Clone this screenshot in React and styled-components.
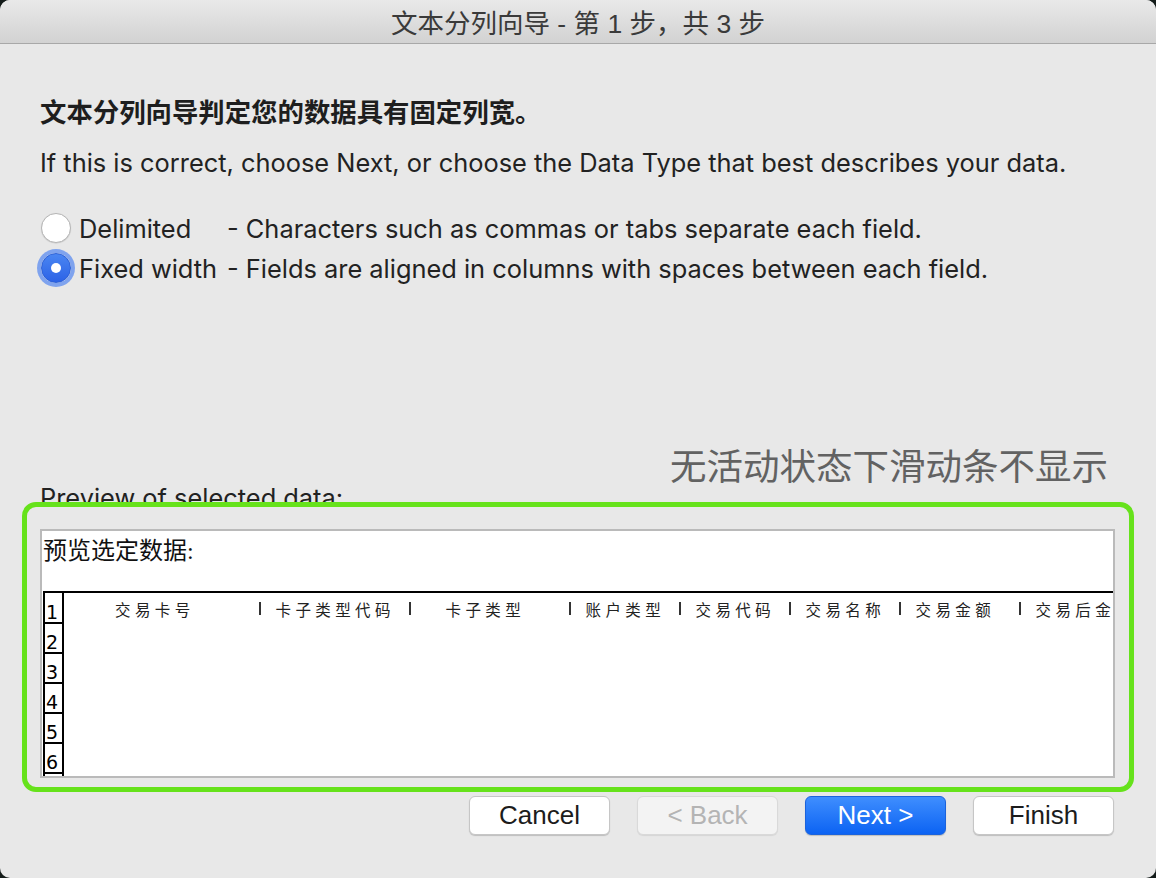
import React from 'react';
import styled, { createGlobalStyle } from 'styled-components';

const GlobalStyle = createGlobalStyle`
  html, body {
    margin: 0;
    padding: 0;
    background: #141c1a;
  }
  #root {
    width: 1156px;
    height: 878px;
  }
`;

const Window = styled.div`
  width: 1156px;
  height: 878px;
  box-sizing: border-box;
  background: #e8e8e8;
  border-radius: 10px;
  overflow: hidden;
  display: flex;
  flex-direction: column;
  font-family: Inter, 'Noto Sans CJK SC', sans-serif;
  color: #222;
`;

const TitleBar = styled.div`
  flex: none;
  height: 43px;
  background: linear-gradient(#e9e9e9, #d2d2d2);
  border-bottom: 1px solid #a8a8a8;
  display: flex;
  align-items: center;
  justify-content: center;
  font-family: 'Liberation Sans', 'Noto Sans CJK SC', sans-serif;
  font-size: 26.5px;
  color: #3a3a3a;
`;

const Body = styled.div`
  display: flex;
  flex-direction: column;
  padding-left: 40px;
`;

const Heading = styled.div`
  margin-top: 50px;
  font-size: 26.4px;
  line-height: 36px;
  font-weight: 700;
  color: #1e1e1e;
`;

const Hint = styled.div`
  margin-top: 15px;
  font-size: 25.4px;
  line-height: 36px;
  color: #222;
`;

const Options = styled.div`
  margin-top: 27px;
  display: flex;
  flex-direction: column;
`;

const OptionRow = styled.div`
  height: 40px;
  display: flex;
  align-items: center;
  font-size: 25.4px;
  color: #222;
`;

const Radio = styled.span`
  flex: none;
  box-sizing: border-box;
  width: 30px;
  height: 30px;
  margin-left: 1px;
  margin-right: 8px;
  border-radius: 50%;
  display: flex;
  align-items: center;
  justify-content: center;
  background: ${(p) => (p.$checked ? 'linear-gradient(#4a86f2, #2c62e6)' : '#fff')};
  border: 1px solid ${(p) => (p.$checked ? '#2a5fd8' : '#b5b5b5')};
  box-shadow: ${(p) => (p.$checked ? '0 0 0 4px rgba(92, 140, 240, 0.75)' : '0 0.5px 1px rgba(0,0,0,0.15)')};

  &::after {
    content: '';
    display: ${(p) => (p.$checked ? 'block' : 'none')};
    width: 10px;
    height: 10px;
    border-radius: 50%;
    background: #fff;
  }
`;

const OptionName = styled.span`
  width: 148px;
  flex: none;
`;

const Note = styled.div`
  margin-top: 159px;
  padding-right: 48px;
  text-align: right;
  font-family: 'Noto Sans CJK SC', sans-serif;
  font-size: 36.5px;
  line-height: 36px;
  color: #626262;
`;

const PreviewLabel = styled.div`
  margin-top: 1px;
  font-size: 25.4px;
  line-height: 28px;
  color: #222;
`;

const Highlight = styled.div`
  position: relative;
  z-index: 1;
  box-sizing: border-box;
  width: 1112px;
  height: 290px;
  margin-top: -10px;
  margin-left: -18px;
  padding: 22px 0 0 13px;
  border: 5px solid #66e21b;
  border-radius: 14px;
  background: #e8e8e8;
`;

const PreviewBox = styled.div`
  box-sizing: border-box;
  width: 1075px;
  height: 249px;
  background: #fff;
  border: 2px solid #bababa;
  overflow: hidden;
  display: flex;
  flex-direction: column;
`;

const PreviewTitle = styled.div`
  box-sizing: border-box;
  height: 60px;
  flex: none;
  padding: 2px 0 0 1px;
  font-family: 'Liberation Serif', 'Noto Sans CJK SC', serif;
  font-size: 24px;
  line-height: 36px;
  color: #111;
`;

const Grid = styled.div`
  flex: none;
  margin-left: 1px;
  border-top: 2px solid #000;
  display: flex;
`;

const NumCol = styled.div`
  flex: none;
  width: 17px;
  border-left: 2px solid #000;
  border-right: 2px solid #000;
  display: flex;
  flex-direction: column;
`;

const NumCell = styled.div`
  box-sizing: border-box;
  height: ${(p) => (p.$first ? '31px' : '30px')};
  border-bottom: 2px solid #000;
  padding-left: 1px;
  display: flex;
  align-items: flex-end;
  font-family: 'DejaVu Sans', sans-serif;
  font-size: 19px;
  line-height: 20px;
  color: #000;
`;

const DataCol = styled.div`
  flex: 1;
  border-right: 2px solid #000;
  min-height: 200px;
`;

const HeaderRow = styled.div`
  height: 31px;
  display: flex;
  align-items: center;
  white-space: nowrap;
  overflow: hidden;
`;

const HeaderCell = styled.div`
  flex: ${(p) => (p.$w ? `0 0 ${p.$w}px` : '1')};
  display: flex;
  align-items: center;
  font-family: 'Liberation Serif', 'Noto Sans CJK SC', serif;
  font-size: 15.5px;
  letter-spacing: 4.4px;
  color: #222;
`;

const Sep = styled.span`
  flex: none;
  width: 1.5px;
  height: 13px;
  background: #333;
`;

const Label = styled.span`
  margin-left: ${(p) => p.$pad}px;
`;

const Footer = styled.div`
  margin-top: 4px;
  padding-right: 42px;
  display: flex;
  justify-content: flex-end;
  gap: 27px;
`;

const Button = styled.button`
  box-sizing: border-box;
  width: 141px;
  height: 39px;
  border-radius: 6px;
  font-family: 'Liberation Sans', sans-serif;
  font-size: 26px;
  padding: 0;
  background: #fff;
  color: #1c1c1c;
  border: 1px solid #c6c6c6;
  box-shadow: 0 1px 1px rgba(0, 0, 0, 0.18);

  &:disabled {
    background: #f3f3f3;
    color: #b4b4b4;
    border-color: #d9d9d9;
    box-shadow: 0 1px 1px rgba(0, 0, 0, 0.08);
  }
`;

const PrimaryButton = styled(Button)`
  background: linear-gradient(#3f8efe, #0c63f3);
  color: #fff;
  border-color: #1b63dc;
`;

const columns = [
  { label: '交易卡号', w: 195, pad: 51, sep: false },
  { label: '卡子类型代码', w: 150, pad: 15, sep: true },
  { label: '卡子类型', w: 160, pad: 35, sep: true },
  { label: '账户类型', w: 110, pad: 15, sep: true },
  { label: '交易代码', w: 110, pad: 15, sep: true },
  { label: '交易名称', w: 110, pad: 15, sep: true },
  { label: '交易金额', w: 120, pad: 15, sep: true },
  { label: '交易后金', pad: 15, sep: true },
];

const rows = [1, 2, 3, 4, 5, 6, 7];

export default function App() {
  return (
    <>
      <GlobalStyle />
      <Window>
        <TitleBar>文本分列向导 - 第 1 步，共 3 步</TitleBar>
        <Body>
          <Heading>文本分列向导判定您的数据具有固定列宽。</Heading>
          <Hint>If this is correct, choose Next, or choose the Data Type that best describes your data.</Hint>
          <Options>
            <OptionRow>
              <Radio />
              <OptionName>Delimited</OptionName>
              <span>- Characters such as commas or tabs separate each field.</span>
            </OptionRow>
            <OptionRow>
              <Radio $checked />
              <OptionName>Fixed width</OptionName>
              <span>- Fields are aligned in columns with spaces between each field.</span>
            </OptionRow>
          </Options>
          <Note>无活动状态下滑动条不显示</Note>
          <PreviewLabel>Preview of selected data:</PreviewLabel>
          <Highlight>
            <PreviewBox>
              <PreviewTitle>预览选定数据:</PreviewTitle>
              <Grid>
                <NumCol>
                  {rows.map((n) => (
                    <NumCell key={n} $first={n === 1}>{n < 7 ? n : ''}</NumCell>
                  ))}
                </NumCol>
                <DataCol>
                  <HeaderRow>
                    {columns.map((c) => (
                      <HeaderCell key={c.label} $w={c.w}>
                        {c.sep && <Sep />}
                        <Label $pad={c.pad}>{c.label}</Label>
                      </HeaderCell>
                    ))}
                  </HeaderRow>
                </DataCol>
              </Grid>
            </PreviewBox>
          </Highlight>
          <Footer>
            <Button>Cancel</Button>
            <Button disabled>&lt; Back</Button>
            <PrimaryButton>Next &gt;</PrimaryButton>
            <Button>Finish</Button>
          </Footer>
        </Body>
      </Window>
    </>
  );
}
